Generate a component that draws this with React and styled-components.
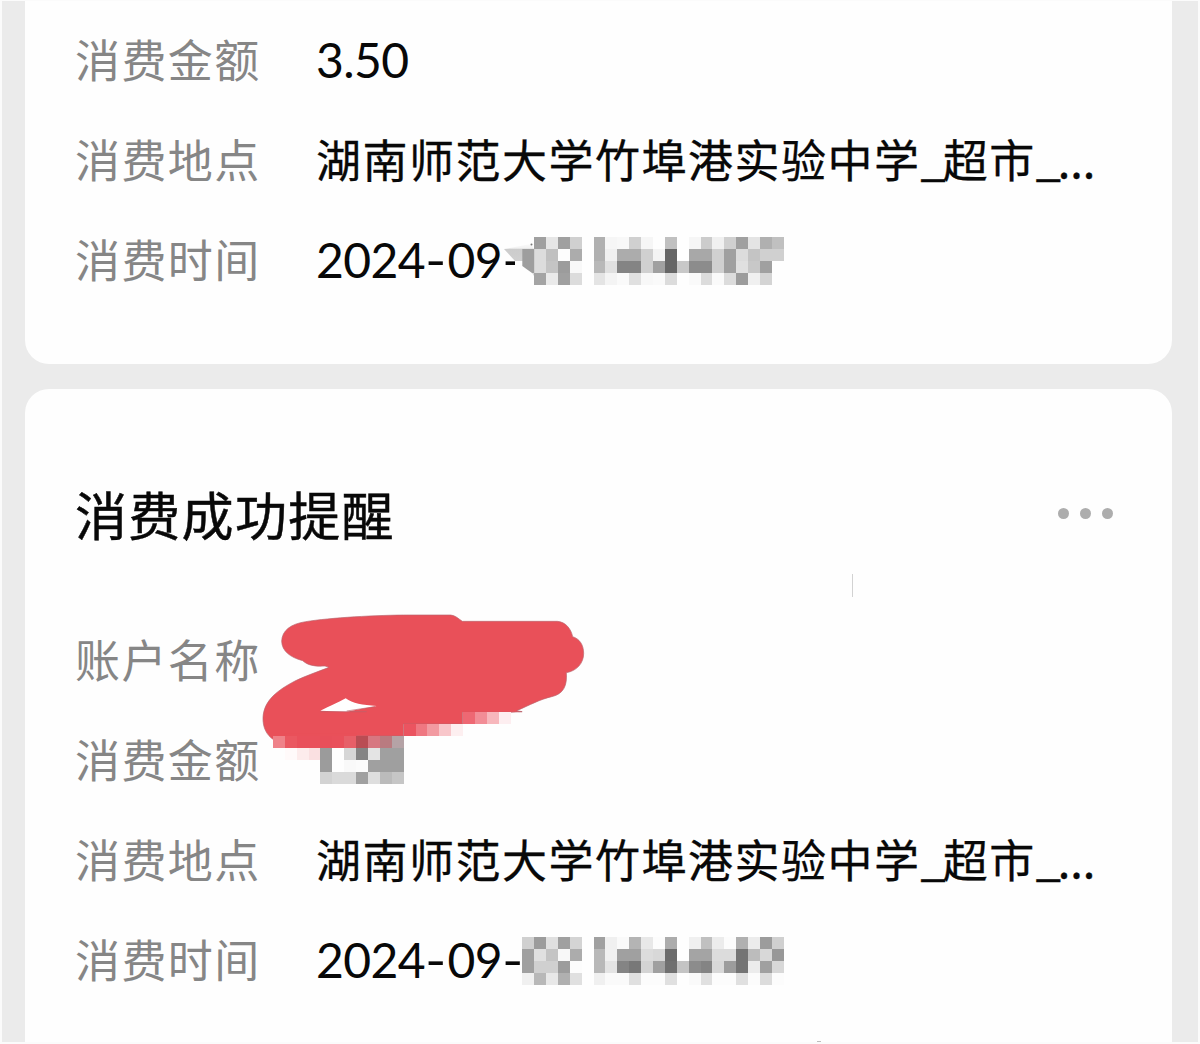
import React from "react";
import styled, { createGlobalStyle } from "styled-components";

const PLACE = "湖南师范大学竹埠港实验中学";

// one byte of grey per cell
const timeMosaicA = [
  "ff a0 e6 a0 d0 ff b0 f6 f8 d0 f6 ff c0 ff f6 cc f0 d0 a0 e4 b0 c0",
  "9c dc c0 fd ac ff b0 f0 ac ac d0 f4 66 ff a8 a8 d0 a0 dc c4 d0 d0",
  "a0 dc c4 9c f8 ff b8 e0 84 84 d0 a0 66 c8 8c 8c d0 a0 e0 c8 a0 ff",
  "ff a4 ea a0 dc ff e4 f4 fa e0 f8 fa dc ff fa dc fa dc 9c f0 d4 ff",
];

const timeMosaicB = [
  "d0 9c e0 a0 d4 ff a0 f0 fa b4 e8 fc ac ff f0 c0 ec fc b0 ec 9c d0",
  "a0 e0 c4 f8 ac ff b8 f0 a0 a0 dc d8 6c ff a4 a4 dc dc 74 bc d8 98",
  "a0 d0 d0 9c fc ff b8 e4 84 78 d4 a0 70 c4 8c 84 d8 9c 74 ec a0 d8",
  "f0 b8 e8 b0 e0 ff f0 fa fa e0 fc fc e0 ff fa e0 fc fc e0 fc dc fc",
];

function Mosaic({ rows, smudge }) {
  return (
    <MosaicSvg viewBox="0 0 281 48" shapeRendering="crispEdges">
      {rows.map((row, y) =>
        row
          .split(" ")
          .map((c, x) =>
            c === "ff" || (smudge && x === 0) ? null : (
              <rect
                key={`${x}-${y}`}
                x={19.3 + x * 11.88}
                y={y * 11.9}
                width="11.88"
                height="11.9"
                fill={`#${c}${c}${c}`}
              />
            )
          )
      )}
      {smudge && (
        <g shapeRendering="auto">
          <path d="M12 20H20V30H12Z" fill="#fefefe" />
          <path d="M1 12L28 7L31 12H20V24H12Z" fill="url(#smudge)" />
          <path d="M19.3 12H31.2V36H29L19.3 29Z" fill="#9e9e9e" />
          <path d="M29 36H31V39Z" fill="#d8d8d8" />
          <circle cx="28.5" cy="7.5" r="1" fill="#777" />
          <linearGradient id="smudge" x1="0" y1="1" x2="0" y2="0">
            <stop offset="0" stopColor="#d0d0d0" />
            <stop offset="0.68" stopColor="#cccccc" />
            <stop offset="0.76" stopColor="#f2f2f2" />
            <stop offset="1" stopColor="#fafafa" />
          </linearGradient>
        </g>
      )}
    </MosaicSvg>
  );
}

// blocks along the lower edge of the marker: x, y, colour
const scribbleBlocks = [
  [638, 336, "#ee6873"], [674, 336, "#f28d96"], [710, 336, "#f7b7bc"], [746, 336, "#fdeef0"],
  [461, 372, "#eb5460"], [497, 372, "#ef7781"], [532, 372, "#f29aa1"], [568, 372, "#f8c6ca"], [603, 372, "#fdeff0"],
  [69, 408, "#ef8289"], [104, 408, "#ea5861"], [140, 408, "#e9505b"], [176, 408, "#e9505b"],
  [211, 408, "#e84f5a"], [247, 408, "#e9505b"], [283, 408, "#e75f68"], [318, 408, "#b94d54"],
  [354, 408, "#d77781"], [390, 408, "#b97b80"], [425, 408, "#b5a3a6"],
  [104, 444, "#fffafa"], [140, 444, "#fdecec"], [176, 444, "#fae0e1"], [211, 444, "#9b9b9b"],
  [283, 444, "#d6d6d6"], [318, 444, "#858585"], [354, 444, "#e4e4e4"], [390, 444, "#a0a0a0"], [425, 444, "#a0a0a0"],
  [211, 480, "#9c9c9c"], [283, 480, "#f9f9f9"], [318, 480, "#fbfbfb"], [354, 480, "#a0a0a0"],
  [390, 480, "#9f9f9f"], [425, 480, "#9f9f9f"],
  [211, 515, "#d3d3d3"], [247, 515, "#dadada"], [283, 515, "#dadada"], [318, 515, "#a0a0a0"],
  [354, 515, "#dedede"], [390, 515, "#bbbbbb"], [425, 515, "#c6c6c6"],
];

function Scribble() {
  return (
    <ScribbleSvg viewBox="0 0 1050 585">
      <path
        fill="#e95059"
        stroke="#b9646c"
        strokeWidth="2"
        d="M158 182C120 172 96 153 95 124C96 91 122 72 167 65C240 53 380 45 480 45H602C616 46 625 56 637 64H922C947 66 963 86 968 110C988 116 1001 134 1001 160C1001 190 980 213 949 218C952 255 942 282 905 290C870 298 840 315 800 332L816 335L780 337H638V372H461V408H318L72 420C48 405 38 380 39 352C42 300 84 270 135 243C165 228 207 214 237 202L225 198C195 200 173 196 158 182Z"
      />
      <rect x="104" y="400" width="215" height="43" fill="#e95059" />
      <path fill="#fff" d="M211 332C237 320 263 308 287 295C308 311 337 315 380 318C350 323 320 330 290 335Z" />
      <path fill="none" stroke="#b9646c" strokeWidth="2" d="M211 335H350M290 333L375 320M805 335H817" />
      <g shapeRendering="crispEdges">
        {scribbleBlocks.map(([x, y, fill]) => (
          <rect key={`${x}-${y}`} x={x} y={y} width="36" height="36" fill={fill} />
        ))}
      </g>
    </ScribbleSvg>
  );
}

function Place() {
  return (
    <Value>
      {PLACE}
      <Latin>_</Latin>超市<Latin>_</Latin>
      <Dots>...</Dots>
    </Value>
  );
}

function Time() {
  return (
    <DateText>
      2024<Dash>-</Dash>09<Dash>-</Dash>
    </DateText>
  );
}

function App() {
  return (
    <Screen>
      <GlobalStyle />
      <Card $first>
        <Row>
          <Label>消费金额</Label>
          <Amount>3.50</Amount>
        </Row>
        <Row>
          <Label>消费地点</Label>
          <Place />
        </Row>
        <Row>
          <Label>消费时间</Label>
          <Time />
          <Mosaic rows={timeMosaicA} smudge />
        </Row>
      </Card>
      <Card>
        <Header>
          <Title>消费成功提醒</Title>
          <More>
            <Dot />
            <Dot />
            <Dot />
          </More>
        </Header>
        <Row>
          <Label>账户名称</Label>
        </Row>
        <Row>
          <Label>消费金额</Label>
        </Row>
        <Row>
          <Label>消费地点</Label>
          <Place />
        </Row>
        <Row>
          <Label>消费时间</Label>
          <Time />
          <Mosaic rows={timeMosaicB} />
        </Row>
        <Scribble />
        <Tick />
        <Speck />
      </Card>
    </Screen>
  );
}

export default App;

const GlobalStyle = createGlobalStyle`
  body {
    margin: 0;
    background: #fdfdfd;
  }
`;

const Screen = styled.div`
  display: flex;
  flex-direction: column;
  gap: 25px;
  box-sizing: border-box;
  width: 1200px;
  height: 1044px;
  padding: 0 26px 0 23px;
  overflow: hidden;
  background: #ebebeb;
  border: 2px solid #fbfbfb;
  border-top-width: 1px;
  font-family: "Noto Sans CJK SC", sans-serif;
`;

const Card = styled.section`
  position: relative;
  flex: none;
  box-sizing: border-box;
  height: ${(props) => (props.$first ? "363px" : "680px")};
  padding: ${(props) => (props.$first ? "10px 50px 0" : "78px 50px 0")};
  background: #fefefe;
  border-radius: ${(props) => (props.$first ? "0 0 24px 24px" : "24px 24px 0 0")};
`;

const Row = styled.div`
  display: flex;
  align-items: center;
  height: 100px;
  white-space: nowrap;
`;

const Label = styled.span`
  flex: none;
  width: 241px;
  padding-bottom: 6px;
  color: #868686;
  font-size: 45px;
  letter-spacing: 1.4px;
`;

const Value = styled.span`
  padding-bottom: 6px;
  color: #080808;
  font-size: 45px;
  letter-spacing: 1.5px;
  -webkit-text-stroke: 0.3px currentColor;
`;

const Latin = styled.span`
  display: inline-block;
  transform: translateY(-2px);
  letter-spacing: -3px;
`;

const Dots = styled.span`
  letter-spacing: 0;
`;

const Amount = styled(Value)`
  padding-bottom: 4px;
  font-family: Lato, "Noto Sans CJK SC", sans-serif;
  font-size: 48px;
  letter-spacing: -0.6px;
  -webkit-text-stroke: 0;
`;

const DateText = styled(Amount)`
  flex: none;
  width: 187px;
`;

const Dash = styled.span`
  display: inline-block;
  width: 22.5px;
  text-indent: -1.5px;
  text-align: center;
  transform: scaleX(1.2);
`;

const MosaicSvg = styled.svg`
  position: relative;
  flex: none;
  width: 281px;
  height: 48px;
`;

const Header = styled.div`
  display: flex;
  align-items: center;
  justify-content: space-between;
  height: 100px;
  padding-right: 9px;
  margin-bottom: 44px;
`;

const Title = styled.h2`
  margin: 0;
  padding-bottom: 7px;
  color: #080808;
  font-size: 52px;
  font-weight: 400;
  letter-spacing: 1.3px;
  -webkit-text-stroke: 0.5px currentColor;
`;

const More = styled.div`
  display: flex;
  gap: 11px;
  padding-bottom: 7px;
`;

const Dot = styled.span`
  width: 11px;
  height: 11px;
  border-radius: 50%;
  background: #adadad;
`;

const ScribbleSvg = styled.svg`
  position: absolute;
  left: 225px;
  top: 211px;
  width: 350px;
  height: 195px;
`;

const Tick = styled.span`
  position: absolute;
  left: 827px;
  top: 185px;
  width: 1px;
  height: 23px;
  background: #d2d2d2;
`;

const Speck = styled.span`
  position: absolute;
  left: 792px;
  top: 652px;
  width: 4px;
  height: 2px;
  background: #bdbdbd;
`;
